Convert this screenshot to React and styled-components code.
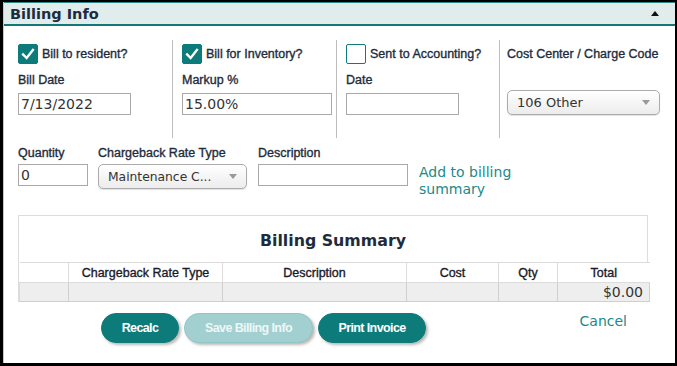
import React from "react";
import styled, { createGlobalStyle } from "styled-components";

const Global = createGlobalStyle`
  html, body { margin: 0; padding: 0; background: #fff; }
  body { font-family: "Liberation Sans", Arial, sans-serif; }
  * { box-sizing: border-box; }
`;

const TEAL = "#0e7b7b";
const LINK = "#1b8a8a";
const INK = "#1d2c3d";

const Frame = styled.div`
  width: 677px;
  height: 366px;
  border-style: solid;
  border-color: #000;
  border-width: 2px 2px 3px 3px;
  background: #fff;
  display: flex;
  flex-direction: column;
`;

const Panel = styled.div`
  flex: 1;
  border-left: 1px solid #c8c8c8;
  display: flex;
  flex-direction: column;
`;

const Header = styled.div`
  height: 24px;
  background: #e1eded;
  border-top: 1px solid #2b8585;
  border-bottom: 2px solid #137777;
  display: flex;
  align-items: center;
  justify-content: space-between;
  padding: 0 16px 0 6px;
`;

const Title = styled.div`
  font-family: "DejaVu Sans", Verdana, sans-serif;
  font-weight: bold;
  font-size: 14.5px;
  color: ${INK};
  line-height: 18px;
  margin-top: 1px;
`;

const Body = styled.div`
  padding: 14px 14px 0 14px;
  display: flex;
  flex-direction: column;
`;

const TopRow = styled.div`
  display: grid;
  grid-template-columns: 154px 164px 163px 1fr;
  height: 98px;
`;

const Column = styled.div`
  display: flex;
  flex-direction: column;
  padding-top: 4px;
  padding-left: ${(p) => p.$pad || 0}px;
  border-left: ${(p) => (p.$divider ? "1px solid #bdbdbd" : "none")};
`;

const CheckRow = styled.label`
  display: flex;
  align-items: center;
  gap: 4px;
  height: 20px;
`;

const Box = styled.span`
  width: 20px;
  height: 20px;
  border-radius: 2px;
  border: 1px solid ${TEAL};
  background: ${(p) => (p.$checked ? TEAL : "#fff")};
  display: inline-flex;
  align-items: center;
  justify-content: center;
  flex: none;
`;

const Label = styled.span`
  font-family: "Liberation Sans", Arial, sans-serif;
  font-weight: normal;
  font-size: 12.5px;
  -webkit-text-stroke: 0.35px ${INK};
  line-height: 15px;
  color: ${INK};
  white-space: nowrap;
`;

const FieldLabel = styled(Label)`
  display: block;
  margin-top: ${(p) => p.$mt ?? 9}px;
`;

const TextBox = styled.div`
  width: ${(p) => p.$w}px;
  height: 22px;
  margin-top: ${(p) => p.$mt ?? 0}px;
  border: 1px solid #a9a9a9;
  background: #fff;
  font-family: "DejaVu Sans", Verdana, sans-serif;
  font-size: 14px;
  color: #333;
  line-height: 20px;
  padding-left: 2px;
  white-space: nowrap;
  overflow: hidden;
`;

const Select = styled.div`
  width: ${(p) => p.$w}px;
  height: 25px;
  margin-top: ${(p) => p.$mt ?? 0}px;
  border: 1px solid #ababab;
  border-radius: 5px;
  background: linear-gradient(#ffffff, #ececec);
  box-shadow: 0 1px 1px rgba(0, 0, 0, 0.12);
  display: flex;
  align-items: center;
  justify-content: space-between;
  padding: 0 9px 0 9px;
  font-family: "DejaVu Sans", Verdana, sans-serif;
  font-size: ${(p) => p.$fs || 13}px;
  color: #333;
  white-space: nowrap;
`;

const Arrow = () => (
  <svg width="8" height="5" viewBox="0 0 8 5">
    <polygon points="0,0 8,0 4,5" fill="#999" />
  </svg>
);

const SecondRow = styled.div`
  display: grid;
  grid-template-columns: 80px 160px 161px auto;
  margin-top: 8px;
`;

const Field = styled.div`
  display: flex;
  flex-direction: column;
`;

const LinkText = styled.a`
  font-family: "DejaVu Sans", Verdana, sans-serif;
  font-size: 14px;
  line-height: 17px;
  color: ${LINK};
  text-decoration: none;
  display: block;
  width: 100px;
  margin-top: ${(p) => p.$mt ?? 0}px;
`;

const Summary = styled.div`
  width: 630px;
  margin-top: 17px;
  border: 1px solid #dcdcdc;
  border-bottom: none;
`;

const SummaryTitle = styled.div`
  height: 46px;
  display: flex;
  align-items: center;
  justify-content: center;
  font-family: "DejaVu Sans", Verdana, sans-serif;
  font-weight: bold;
  font-size: 15.8px;
  color: ${INK};
  padding-top: 3px;
`;

const Table = styled.table`
  width: 100%;
  border-collapse: collapse;
  table-layout: fixed;
`;

const Th = styled.th`
  height: 20px;
  padding: 0;
  font-family: "Liberation Sans", Arial, sans-serif;
  font-weight: normal;
  font-size: 12.5px;
  -webkit-text-stroke: 0.35px #1a1a2a;
  color: #1a1a2a;
  text-align: center;
  border: 1px solid #dcdcdc;
  background: #fff;
  &:first-child { border-left: none; }
  &:last-child { border-right: none; }
`;

const Td = styled.td`
  height: 19px;
  padding: 0 6px 0 0;
  background: #eeeeee;
  border: 1px solid #cfcfcf;
  font-family: "DejaVu Sans", Verdana, sans-serif;
  font-size: 14px;
  color: #333;
  text-align: right;
  line-height: 17px;
  &:first-child { border-left-color: #dcdcdc; }
`;

const Actions = styled.div`
  display: flex;
  align-items: flex-start;
  margin-top: 11px;
  width: 630px;
  padding-left: 83px;
`;

const Buttons = styled.div`
  display: flex;
  gap: 5px;
`;

const Button = styled.button`
  height: 30px;
  width: ${(p) => p.$w}px;
  border-radius: 15px;
  border: 1px solid ${(p) => (p.disabled ? "#8fc6c6" : TEAL)};
  background: ${(p) => (p.disabled ? "#a2d0d0" : TEAL)};
  color: ${(p) => (p.disabled ? "#eef7f7" : "#fff")};
  font-family: "Liberation Sans", Arial, sans-serif;
  font-weight: bold;
  font-size: 12.5px;
  letter-spacing: -0.6px;
  box-shadow: 2px 2px 3px rgba(0, 0, 0, 0.28);
  padding: 0;
  cursor: pointer;
`;

const Cancel = styled(LinkText)`
  width: auto;
  margin-left: auto;
  margin-right: 21px;
  margin-top: 0px;
`;

const Check = () => (
  <svg width="20" height="20" viewBox="0 0 20 20">
    <polyline
      points="4.5,10.5 8.5,14.5 15.5,5.5"
      fill="none"
      stroke="#fff"
      strokeWidth="2.6"
      strokeLinecap="square"
    />
  </svg>
);

const Caret = () => (
  <svg width="8" height="5" viewBox="0 0 8 5">
    <polygon points="0,5 8,5 4,0" fill="#111" />
  </svg>
);

export default function App() {
  const cols = [
    { check: true, label: "Bill to resident?", field: "Bill Date", value: "7/13/2022", w: 113 },
    { check: true, label: "Bill for Inventory?", field: "Markup %", value: "15.00%", w: 150 },
    { check: false, label: "Sent to Accounting?", field: "Date", value: "", w: 113 },
  ];
  const heads = [
    ["", 49],
    ["Chargeback Rate Type", 154],
    ["Description", 184],
    ["Cost", 92],
    ["Qty", 59],
    ["Total", 92],
  ];
  return (
    <>
      <Global />
      <Frame>
        <Panel>
          <Header>
            <Title>Billing Info</Title>
            <Caret />
          </Header>
          <Body>
            <TopRow>
              {cols.map((c, i) => (
                <Column key={c.label} $divider={i > 0} $pad={i > 0 ? 9 : 0}>
                  <CheckRow>
                    <Box $checked={c.check}>{c.check && <Check />}</Box>
                    <Label>{c.label}</Label>
                  </CheckRow>
                  <FieldLabel>{c.field}</FieldLabel>
                  <TextBox $w={c.w} $mt={5}>{c.value}</TextBox>
                </Column>
              ))}
              <Column $divider $pad={7}>
                <CheckRow>
                  <Label>Cost Center / Charge Code</Label>
                </CheckRow>
                <Select $w={153} $mt={26} $fs={13}>
                  <span>106 Other</span>
                  <Arrow />
                </Select>
              </Column>
            </TopRow>
            <SecondRow>
              <Field>
                <FieldLabel $mt={0}>Quantity</FieldLabel>
                <TextBox $w={70} $mt={3}>0</TextBox>
              </Field>
              <Field>
                <FieldLabel $mt={0}>Chargeback Rate Type</FieldLabel>
                <Select $w={149} $mt={3} $fs={12.3}>
                  <span>Maintenance C...</span>
                  <Arrow />
                </Select>
              </Field>
              <Field>
                <FieldLabel $mt={0}>Description</FieldLabel>
                <TextBox $w={150} $mt={3}></TextBox>
              </Field>
              <Field>
                <LinkText href="#" $mt={18}>Add to billing summary</LinkText>
              </Field>
            </SecondRow>
            <Summary>
              <SummaryTitle>Billing Summary</SummaryTitle>
              <Table>
                <colgroup>
                  {heads.map(([h, w], i) => (
                    <col key={i} style={{ width: w }} />
                  ))}
                </colgroup>
                <thead>
                  <tr>
                    {heads.map(([h], i) => (
                      <Th key={i}>{h}</Th>
                    ))}
                  </tr>
                </thead>
                <tbody>
                  <tr>
                    <Td />
                    <Td />
                    <Td />
                    <Td />
                    <Td />
                    <Td>$0.00</Td>
                  </tr>
                </tbody>
              </Table>
            </Summary>
            <Actions>
              <Buttons>
                <Button $w={78}>Recalc</Button>
                <Button $w={129} disabled>Save Billing Info</Button>
                <Button $w={108}>Print Invoice</Button>
              </Buttons>
              <Cancel href="#">Cancel</Cancel>
            </Actions>
          </Body>
        </Panel>
      </Frame>
    </>
  );
}
